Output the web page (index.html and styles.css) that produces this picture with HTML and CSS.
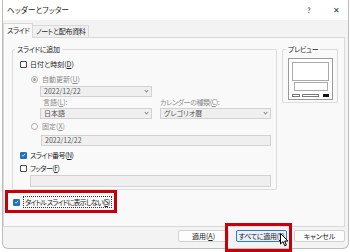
FILE: index.html
```html
<!DOCTYPE html>
<html lang="ja">

<head>
	<meta charset="utf-8">
	<meta name="viewport" content="width=device-width, initial-scale=1">
	<title>ヘッダーとフッター</title>
	<link rel="stylesheet" href="styles.css">
</head>

<body>
	<div class="dialog">
		<div class="titlebar">
			<span class="title">ヘッダーとフッター</span>
			<span class="help">?</span>
			<span class="close">✕</span>
		</div>

		<div class="tabs">
			<div class="tab active">スライド</div>
			<div class="tab">ノートと配布資料</div>
		</div>

		<div class="panel">
			<div class="panel-row">
				<fieldset class="group main-group">
					<legend>スライドに追加</legend>
					<div class="group-body">
						<div class="row row-date">
							<span class="check"></span>
							<span>日付と時刻(<u>D</u>)</span>
						</div>
						<div class="row row-auto disabled">
							<span class="radio on"></span>
							<span>自動更新(<u>U</u>)</span>
						</div>
						<div class="indent">
							<div class="select date-select">2022/12/22<span class="arrow"></span></div>
							<div class="cols labels disabled">
								<span class="col-left">言語(<u>L</u>):</span>
								<span class="col-right">カレンダーの種類(<u>C</u>):</span>
							</div>
							<div class="cols selects">
								<div class="select col-left">日本語<span class="arrow"></span></div>
								<div class="select col-right">グレゴリオ暦<span class="arrow"></span></div>
							</div>
						</div>
						<div class="row row-fixed disabled">
							<span class="radio"></span>
							<span>固定(<u>X</u>)</span>
						</div>
						<div class="input fixed-input">2022/12/22</div>
						<div class="row row-number">
							<span class="check checked">
								<svg viewBox="0 0 8 8" width="6" height="6"><path d="M1.5 4.2 L3.3 6 L6.6 2" fill="none" stroke="#fff" stroke-width="1.2"/></svg>
							</span>
							<span class="kana">スライド番号(<u>N</u>)</span>
						</div>
						<div class="row row-footer">
							<span class="check"></span>
							<span class="kana">フッター(<u>F</u>)</span>
						</div>
						<div class="input footer-input"></div>
					</div>
				</fieldset>

				<fieldset class="group preview-group">
					<legend>プレビュー</legend>
					<svg class="preview" viewBox="0 0 45 42" width="45" height="42">
						<rect x="0.5" y="0.5" width="44" height="41" fill="#fff" stroke="#9a9a9a"/>
						<rect x="4.5" y="4.5" width="36" height="18" fill="none" stroke="#555" stroke-dasharray="1 1"/>
						<rect x="6.5" y="24.5" width="33" height="8" fill="none" stroke="#555" stroke-dasharray="1 1"/>
						<rect x="4.5" y="36.5" width="7" height="2" fill="none" stroke="#777"/>
						<rect x="14.5" y="36.5" width="16" height="2" fill="none" stroke="#777"/>
						<rect x="35" y="36" width="6" height="3" fill="#111"/>
					</svg>
				</fieldset>
			</div>

			<div class="row row-title">
				<span class="check checked">
					<svg viewBox="0 0 8 8" width="6" height="6"><path d="M1.5 4.2 L3.3 6 L6.6 2" fill="none" stroke="#fff" stroke-width="1.2"/></svg>
				</span>
				<span class="focus">タイトル スライドに表示しない(<u>S</u>)</span>
			</div>

			<div class="mark mark-title"></div>
		</div>

		<div class="buttons">
			<button class="btn">適用(<u>A</u>)</button>
			<button class="btn default">すべてに適用(<u>Y</u>)</button>
			<button class="btn">キャンセル</button>
		</div>

		<div class="mark mark-apply"></div>
		<svg class="cursor" viewBox="0 0 9 14" width="9" height="14">
			<path d="M0.5 0.5 L0.5 11 L3 8.6 L4.8 12.8 L6.4 12.1 L4.7 8 L8 8 Z" fill="#fff" stroke="#000" stroke-width="1" stroke-linejoin="round"/>
		</svg>
	</div>
</body>

</html>
```

FILE: styles.css
```css
* {
	box-sizing: border-box;
}

html,
body {
	margin: 0;
	padding: 0;
}

body {
	width: 350px;
	height: 252px;
	overflow: hidden;
	background-color: #ffffff;
	color: #1b1b1b;
	font-family: "Noto Sans CJK JP", "Noto Sans", sans-serif;
	font-size: 7px;
	font-feature-settings: "palt";
	line-height: 10px;
	white-space: nowrap;
}

u {
	text-decoration: underline;
	text-underline-offset: 1px;
}

.kana {
	letter-spacing: -0.5px;
}

.dialog {
	position: relative;
	margin-left: 2px;
	width: 347px;
	height: 249px;
	border: 1px solid #bdbdbd;
	border-top: none;
	border-radius: 0 0 6px 6px;
	background-color: #f3f3f3;
	display: flex;
	flex-direction: column;
}

/* title bar */
.titlebar {
	height: 20px;
	display: flex;
	align-items: center;
	padding-left: 4px;
	background-color: #ffffff;
}

.title {
	flex: 1;
	font-size: 7.5px;
	letter-spacing: 0.2px;
}

.help {
	width: 10px;
	text-align: center;
	margin-right: 17px;
}

.close {
	width: 10px;
	text-align: center;
	margin-right: 7px;
	font-size: 8px;
	color: #333333;
}

/* tabs */
.tabs {
	height: 17px;
	display: flex;
	align-items: flex-end;
}

.tab {
	height: 12px;
	line-height: 11px;
	padding: 0 2px 0 3px;
	border: 1px solid #d9d9d9;
	border-bottom: none;
	border-left: none;
	background-color: #f0f0f0;
	letter-spacing: -0.3px;
}

.tab.active {
	position: relative;
	z-index: 2;
	height: 15px;
	width: 30px;
	padding: 0 0 0 3px;
	margin-bottom: -1px;
	line-height: 13px;
	border-left: 1px solid #d9d9d9;
	background-color: #f9f9f9;
	letter-spacing: -0.4px;
}

/* panel */
.panel {
	position: relative;
	height: 190px;
	margin-right: 3px;
	padding: 7px 0 0 8px;
	border: 1px solid #d9d9d9;
	background-color: #f9f9f9;
}

.panel-row {
	display: flex;
	align-items: flex-start;
}

.group {
	margin: 0;
	padding: 0;
	border: 1px solid #dcdcdc;
	border-radius: 2px;
}

.group legend {
	padding: 0 2px;
	line-height: 8px;
	letter-spacing: -0.3px;
}

.main-group {
	width: 265px;
	height: 145px;
}

.main-group legend {
	margin-left: 2px;
}

.preview-group {
	width: 56px;
	height: 58px;
	margin-left: 5px;
}

.preview-group legend {
	margin-left: 3px;
}

.preview {
	display: block;
	margin: 5px 0 0 5px;
}

.group-body {
	padding: 0 5px 0 7px;
}

.row {
	display: flex;
	align-items: center;
	height: 10px;
}

.disabled {
	color: #8c8c8c;
}

.check {
	width: 7px;
	height: 7px;
	margin-right: 3px;
	border: 1px solid #4a4a4a;
	border-radius: 1px;
	background-color: #ffffff;
	display: flex;
	align-items: center;
	justify-content: center;
}

.check.checked {
	border-color: #1f6fc5;
	background-color: #1f6fc5;
}

.radio {
	width: 7px;
	height: 7px;
	margin: 0 4px 0 11px;
	border: 1px solid #a8a8a8;
	border-radius: 50%;
	background-color: #fbfbfb;
	display: flex;
	align-items: center;
	justify-content: center;
}

.radio.on::after {
	content: "";
	width: 3px;
	height: 3px;
	border-radius: 50%;
	background-color: #a0a0a0;
}

.row-date {
	margin-top: 6px;
}

.row-auto {
	margin-top: 5px;
}

.indent {
	padding-left: 20px;
}

.select,
.input {
	position: relative;
	height: 11px;
	line-height: 9px;
	padding-left: 3px;
	border: 1px solid #d2d2d2;
	background-color: #efefef;
	color: #555555;
}

.select .arrow {
	position: absolute;
	right: 3px;
	top: 2px;
	width: 3px;
	height: 3px;
	border-right: 1px solid #8c8c8c;
	border-bottom: 1px solid #8c8c8c;
	transform: rotate(45deg);
}

.date-select {
	width: 112px;
	margin-top: 2px;
}

.cols {
	display: flex;
	gap: 8px;
}

.col-left {
	width: 112px;
}

.col-right {
	width: 111px;
}

.labels {
	height: 10px;
}

.labels .col-left {
	padding-left: 3px;
}

.labels .col-right {
	letter-spacing: -0.4px;
}

.selects {
	margin-top: 1px;
}

.row-fixed {
	margin-top: 2px;
}

.fixed-input {
	margin: 4px 0 0 21px;
}

.row-number {
	margin-top: 4px;
}

.row-footer {
	margin-top: 3px;
}

.footer-input {
	height: 12px;
	margin: 2px 0 0 10px;
}

.row-title {
	margin: 6px 0 0 1px;
	height: 12px;
}

.focus {
	line-height: 10px;
	padding: 0 1px;
	border: 1px dotted #333333;
	letter-spacing: -0.8px;
}

/* buttons */
.buttons {
	display: flex;
	justify-content: flex-end;
	gap: 7px;
	margin-top: 3px;
	padding-right: 3px;
}

.btn {
	width: 51px;
	height: 12px;
	padding: 0;
	font: inherit;
	line-height: 10px;
	color: #1b1b1b;
	border: 1px solid #d0d0d0;
	border-radius: 2px;
	background-color: #fdfdfd;
}

.btn.default {
	border-color: #2a7ad6;
	background-color: #e8f1fb;
	letter-spacing: -0.3px;
}

/* red annotation frames */
.mark {
	position: absolute;
	border: 3px solid #c3000b;
	z-index: 5;
}

.mark-title {
	left: 1px;
	top: 152px;
	width: 112px;
	height: 23px;
}

.mark-apply {
	left: 222px;
	top: 223px;
	width: 67px;
	height: 29px;
}

.cursor {
	position: absolute;
	left: 277px;
	top: 233px;
	z-index: 6;
}
```
